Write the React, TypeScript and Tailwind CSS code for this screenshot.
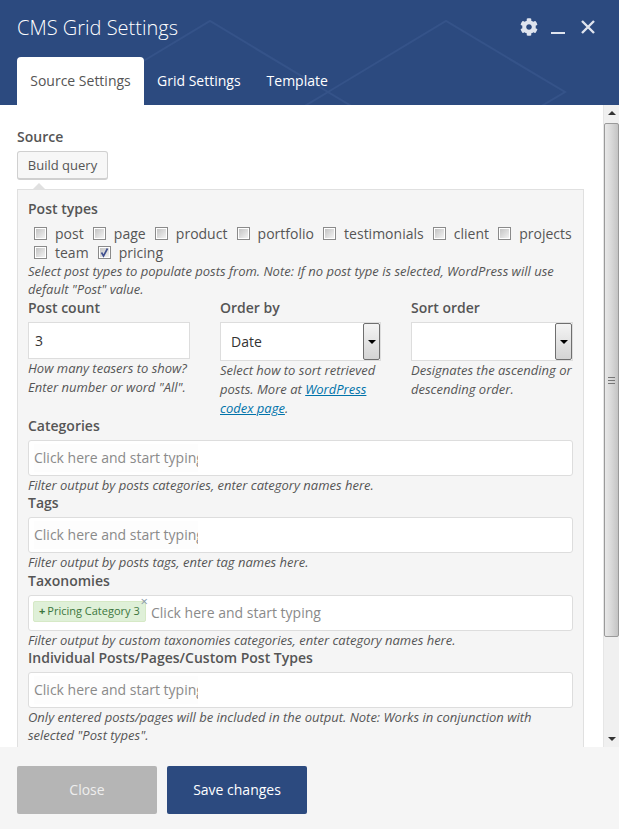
import { FaCog } from "react-icons/fa";

const postTypes = [
    ["post", "page", "product", "portfolio", "testimonials", "client", "projects"],
    ["team", "pricing"],
];

function Checkbox({ label, checked }: { label: string; checked?: boolean }) {
    return (
        <span className="flex items-center">
            <span className="relative h-[13px] w-[13px] border border-[#8a8a8a] bg-white p-px">
                <span className="block h-full w-full bg-gradient-to-br from-[#c4c4c4] to-[#f2f2f2]" />
                {checked && (
                    <svg viewBox="0 0 13 13" className="absolute -left-px -top-px h-[13px] w-[13px]">
                        <path d="M3.5 6.5 L5.5 10 L9.5 2.5" fill="none" stroke="#3f4f8f" strokeWidth="1.6" />
                    </svg>
                )}
            </span>
            <span className="ml-2 mr-[9.2px]">{label}</span>
        </span>
    );
}

function Help({ children }: { children: React.ReactNode }) {
    return <p className="text-[13px] italic leading-[18px] text-[#555]">{children}</p>;
}

function ColumnHelp({ children }: { children: React.ReactNode }) {
    return <p className="text-[13px] italic leading-[19px] text-[#555]">{children}</p>;
}

function Label({ children }: { children: React.ReactNode }) {
    return <div className="text-sm font-semibold leading-[18px] text-[#555]">{children}</div>;
}

function TagInput() {
    return (
        <div className="mt-[5px] flex h-9 items-center rounded-[3px] border border-[#ddd] bg-white pl-[5px]">
            <span className="w-[164px] overflow-hidden whitespace-nowrap bg-[#fdfdfd] text-sm leading-[28px] text-[#8a8a8a]">
                Click here and start typing
            </span>
        </div>
    );
}

function NativeSelect({ value }: { value?: string }) {
    return (
        <div className="mt-[5px] flex h-[39px] items-center justify-between border border-[#ddd] bg-white">
            <span className="pl-[10px] text-sm text-[#333]">{value}</span>
            <span className="flex h-[37px] w-[17px] items-center justify-center rounded-[2px] border border-[#6f6f6f] bg-gradient-to-b from-[#f4f4f4] to-[#d4d4d4]">
                <span className="h-0 w-0 border-x-[4px] border-t-[4px] border-x-transparent border-t-black" />
            </span>
        </div>
    );
}

export default function App() {
    return (
        <div className="flex h-[829px] w-[619px] flex-col overflow-hidden bg-white font-['Open_Sans',sans-serif] text-[#555]">
            <header className="relative h-[105px] shrink-0 overflow-hidden bg-[#2c4a7f]">
                <svg className="absolute inset-0 h-full w-full" viewBox="0 0 619 105" fill="none">
                    <path
                        d="M92 92 L210 21 L328 92 L210 163 Z M328 92 L446 21 L565 92 L446 163 Z M328 92 L260 133 M328 92 L396 133"
                        stroke="#355389"
                        strokeWidth="2"
                    />
                </svg>
                <div className="relative flex h-[57px] items-start justify-between pl-[17px]">
                    <h1 className="pt-[13px] text-xl font-light leading-[30px] text-white">CMS Grid Settings</h1>
                    <div className="flex items-start pr-6 pt-[18px] text-[#dfe4ee]">
                        <FaCog className="h-[18px] w-[18px]" />
                        <span className="ml-[13px] mt-[14px] h-[2px] w-[14px] bg-[#dfe4ee]" />
                        <svg viewBox="0 0 14 14" className="ml-4 mt-[2px] h-[14px] w-[14px]">
                            <path d="M1 1 L13 13 M13 1 L1 13" stroke="#dfe4ee" strokeWidth="2.4" />
                        </svg>
                    </div>
                </div>
                <nav className="relative ml-[17px] flex h-12 items-center text-sm">
                    <span className="flex h-12 w-[127px] items-center justify-center rounded-t-[4px] bg-white text-[#555]">
                        Source Settings
                    </span>
                    <span className="ml-[13px] text-white">Grid Settings</span>
                    <span className="ml-[26px] text-white">Template</span>
                </nav>
            </header>

            <div className="flex min-h-0 flex-1">
                <main className="min-w-0 flex-1 overflow-hidden pl-[17px] pr-[19px] pt-[23px]">
                    <div className="text-sm font-semibold leading-[18px]">Source</div>
                    <button className="mt-[5px] block h-[29px] w-[91px] rounded-[3px] border border-b-2 border-[#d0d0d0] bg-[#f7f7f7] pt-px text-[13px] text-[#555]">
                        Build query
                    </button>
                    <div className="relative mt-[9px] border border-[#e0e0e0] bg-[#f5f5f5] px-[10px] pt-[10px]">
                        <span className="absolute -top-[7px] left-[14px] h-0 w-0 border-x-[7px] border-b-[7px] border-x-transparent border-b-[#e0e0e0]" />
                        <Label>Post types</Label>
                        <div className="mt-[6px] pl-[6px] text-sm leading-[19px]">
                            {postTypes.map((row) => (
                                <div key={row[0]} className="flex h-[19px] items-center">
                                    {row.map((t) => (
                                        <Checkbox key={t} label={t} checked={t === "pricing"} />
                                    ))}
                                </div>
                            ))}
                        </div>
                        <Help>
                            Select post types to populate posts from. Note: If no post type is selected, WordPress will
                            use default "Post" value.
                        </Help>

                        <div className="mt-px grid grid-cols-[162px_161px_162px] gap-x-[30px]">
                            <div>
                                <Label>Post count</Label>
                                <div className="mt-[5px] flex h-[37px] items-center border border-[#ddd] bg-white pl-[6px] text-sm text-[#333]">
                                    3
                                </div>
                                <ColumnHelp>
                                    How many teasers to show?
                                    <br />
                                    Enter number or word "All".
                                </ColumnHelp>
                            </div>
                            <div>
                                <Label>Order by</Label>
                                <NativeSelect value="Date" />
                                <ColumnHelp>
                                    Select how to sort retrieved posts. More at{" "}
                                    <a className="text-[#0073aa] underline">WordPress codex page</a>.
                                </ColumnHelp>
                            </div>
                            <div>
                                <Label>Sort order</Label>
                                <NativeSelect />
                                <ColumnHelp>Designates the ascending or descending order.</ColumnHelp>
                            </div>
                        </div>

                        <div className="-mt-px">
                            <Label>Categories</Label>
                            <TagInput />
                            <Help>Filter output by posts categories, enter category names here.</Help>
                        </div>
                        <div>
                            <Label>Tags</Label>
                            <TagInput />
                            <Help>Filter output by posts tags, enter tag names here.</Help>
                        </div>
                        <div className="mt-px">
                            <Label>Taxonomies</Label>
                            <div className="mt-[5px] flex h-9 items-center rounded-[3px] border border-[#ddd] bg-white pl-1">
                                <span className="relative -mt-[4px] flex h-[21px] w-[113px] items-center rounded-[2px] border border-[#d6e9c6] bg-[#dff0d8] pl-[5px] text-[11px] text-[#3c763d]">
                                    <span className="mr-[2px] font-bold">+</span>Pricing Category 3
                                    <span className="absolute -right-[3px] -top-[6px] text-[13px] leading-[11px] text-[#8a9aa8]">
                                        ×
                                    </span>
                                </span>
                                <span className="ml-[5px] text-sm text-[#8a8a8a]">Click here and start typing</span>
                            </div>
                            <Help>Filter output by custom taxonomies categories, enter category names here.</Help>
                        </div>
                        <div>
                            <Label>Individual Posts/Pages/Custom Post Types</Label>
                            <TagInput />
                            <Help>
                                Only entered posts/pages will be included in the output. Note: Works in conjunction with
                                selected "Post types".
                            </Help>
                        </div>
                        <div className="h-8" />
                    </div>
                </main>

                <aside className="flex w-4 shrink-0 flex-col items-center border-l border-[#e6e6e6] bg-[#f0f0f0]">
                    <span className="mt-[6px] h-0 w-0 border-x-[4px] border-b-[4px] border-x-transparent border-b-[#333]" />
                    <div className="mt-[8px] flex h-[514px] w-[15px] items-center justify-center rounded-[2px] border border-[#9a9a9a] bg-gradient-to-r from-[#e8e8e8] via-[#d8d8d8] to-[#c4c4c4]">
                        <span className="h-[7px] w-[7px] border-y border-[#777] before:mt-[2px] before:block before:h-px before:bg-[#777]" />
                    </div>
                    <span className="mb-[6px] mt-auto h-0 w-0 border-x-[4px] border-t-[4px] border-x-transparent border-t-[#333]" />
                </aside>
            </div>

            <footer className="flex h-[82px] shrink-0 items-start gap-[10px] bg-[#f5f5f5] pl-[17px] pt-[19px]">
                <button className="h-12 w-[140px] rounded-[2px] bg-[#b5b5b5] text-sm text-[#eeeeee]">Close</button>
                <button className="h-12 w-[140px] rounded-[2px] bg-[#2c4a7f] text-sm text-white">Save changes</button>
            </footer>
        </div>
    );
}
